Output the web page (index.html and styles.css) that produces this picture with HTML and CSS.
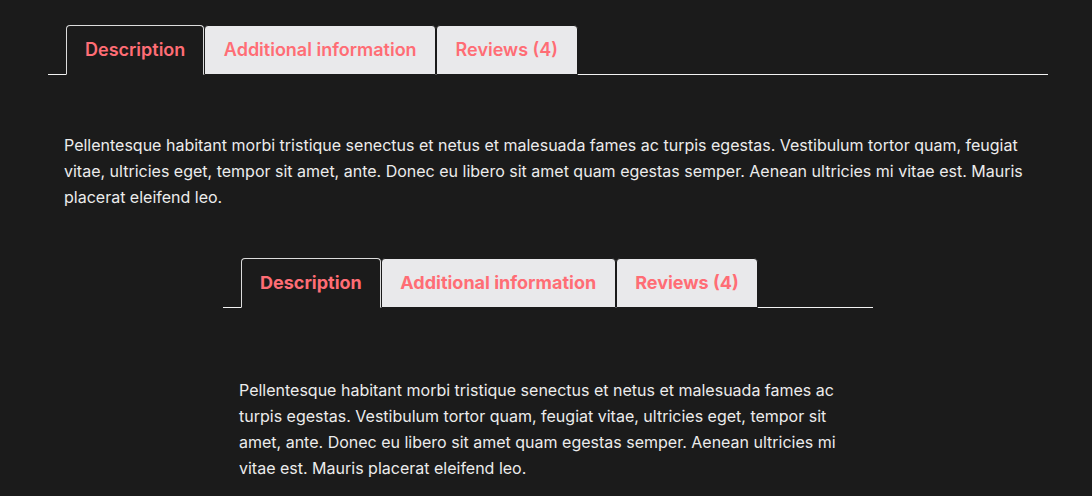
FILE: index.html
```html
<!DOCTYPE html>
<html lang="en">
<head>
    <meta charset="UTF-8">
    <meta name="viewport" content="width=device-width, initial-scale=1.0">
    <title>Product tabs</title>
    <link rel="stylesheet" href="styles.css">
</head>
<body>

<div class="page">
    <div class="product-tabs wide">
        <ul class="tabs">
            <li class="active">Description</li>
            <li>Additional information</li>
            <li>Reviews (4)</li>
        </ul>
        <p class="panel">Pellentesque habitant morbi tristique senectus et netus et malesuada fames ac turpis egestas. Vestibulum tortor quam, feugiat vitae, ultricies eget, tempor sit amet, ante. Donec eu libero sit amet quam egestas semper. Aenean ultricies mi vitae est. Mauris placerat eleifend leo.</p>
    </div>

    <div class="product-tabs narrow">
        <ul class="tabs">
            <li class="active">Description</li>
            <li>Additional information</li>
            <li>Reviews (4)</li>
        </ul>
        <p class="panel">Pellentesque habitant morbi tristique senectus et netus et malesuada fames ac turpis egestas. Vestibulum tortor quam, feugiat vitae, ultricies eget, tempor sit amet, ante. Donec eu libero sit amet quam egestas semper. Aenean ultricies mi vitae est. Mauris placerat eleifend leo.</p>
    </div>
</div>

</body>
</html>
```

FILE: styles.css
```css
* {
    box-sizing: border-box;
    margin: 0;
    padding: 0;
    font-family: Inter, "Noto Sans", sans-serif;
}
body {
    background-color: #1b1b1b;
    color: #ececec;
    overflow: hidden;
}
.page {
    padding: 25px 44px 0 48px;
}
.product-tabs {
    margin: 0 auto;
}
.product-tabs.wide {
    width: 1000px;
}
.product-tabs.narrow {
    width: 650px;
    margin-top: 48px;
}
.tabs {
    display: flex;
    list-style: none;
    padding: 0 18px;
    border-bottom: 1px solid #f2f2f2;
}
.tabs li {
    margin-bottom: -1px;
    padding: 11px 18.5px;
    font-size: 18px;
    line-height: 26px;
    font-weight: 600;
    color: #ff6d75;
    background: #e9e9eb;
    border: 1px solid #1b1b1b;
    border-radius: 4px 4px 0 0;
    cursor: pointer;
}
.tabs li.active {
    padding: 11px 18px;
    background: #1b1b1b;
    border-color: #dcdcdc;
    border-bottom-color: #1b1b1b;
}
.narrow .tabs li {
    font-weight: 700;
}
.panel {
    padding: 0 16px;
    font-size: 16px;
    line-height: 26px;
}
.wide .panel {
    margin-top: 57px;
}
.narrow .panel {
    margin-top: 69px;
}
```
